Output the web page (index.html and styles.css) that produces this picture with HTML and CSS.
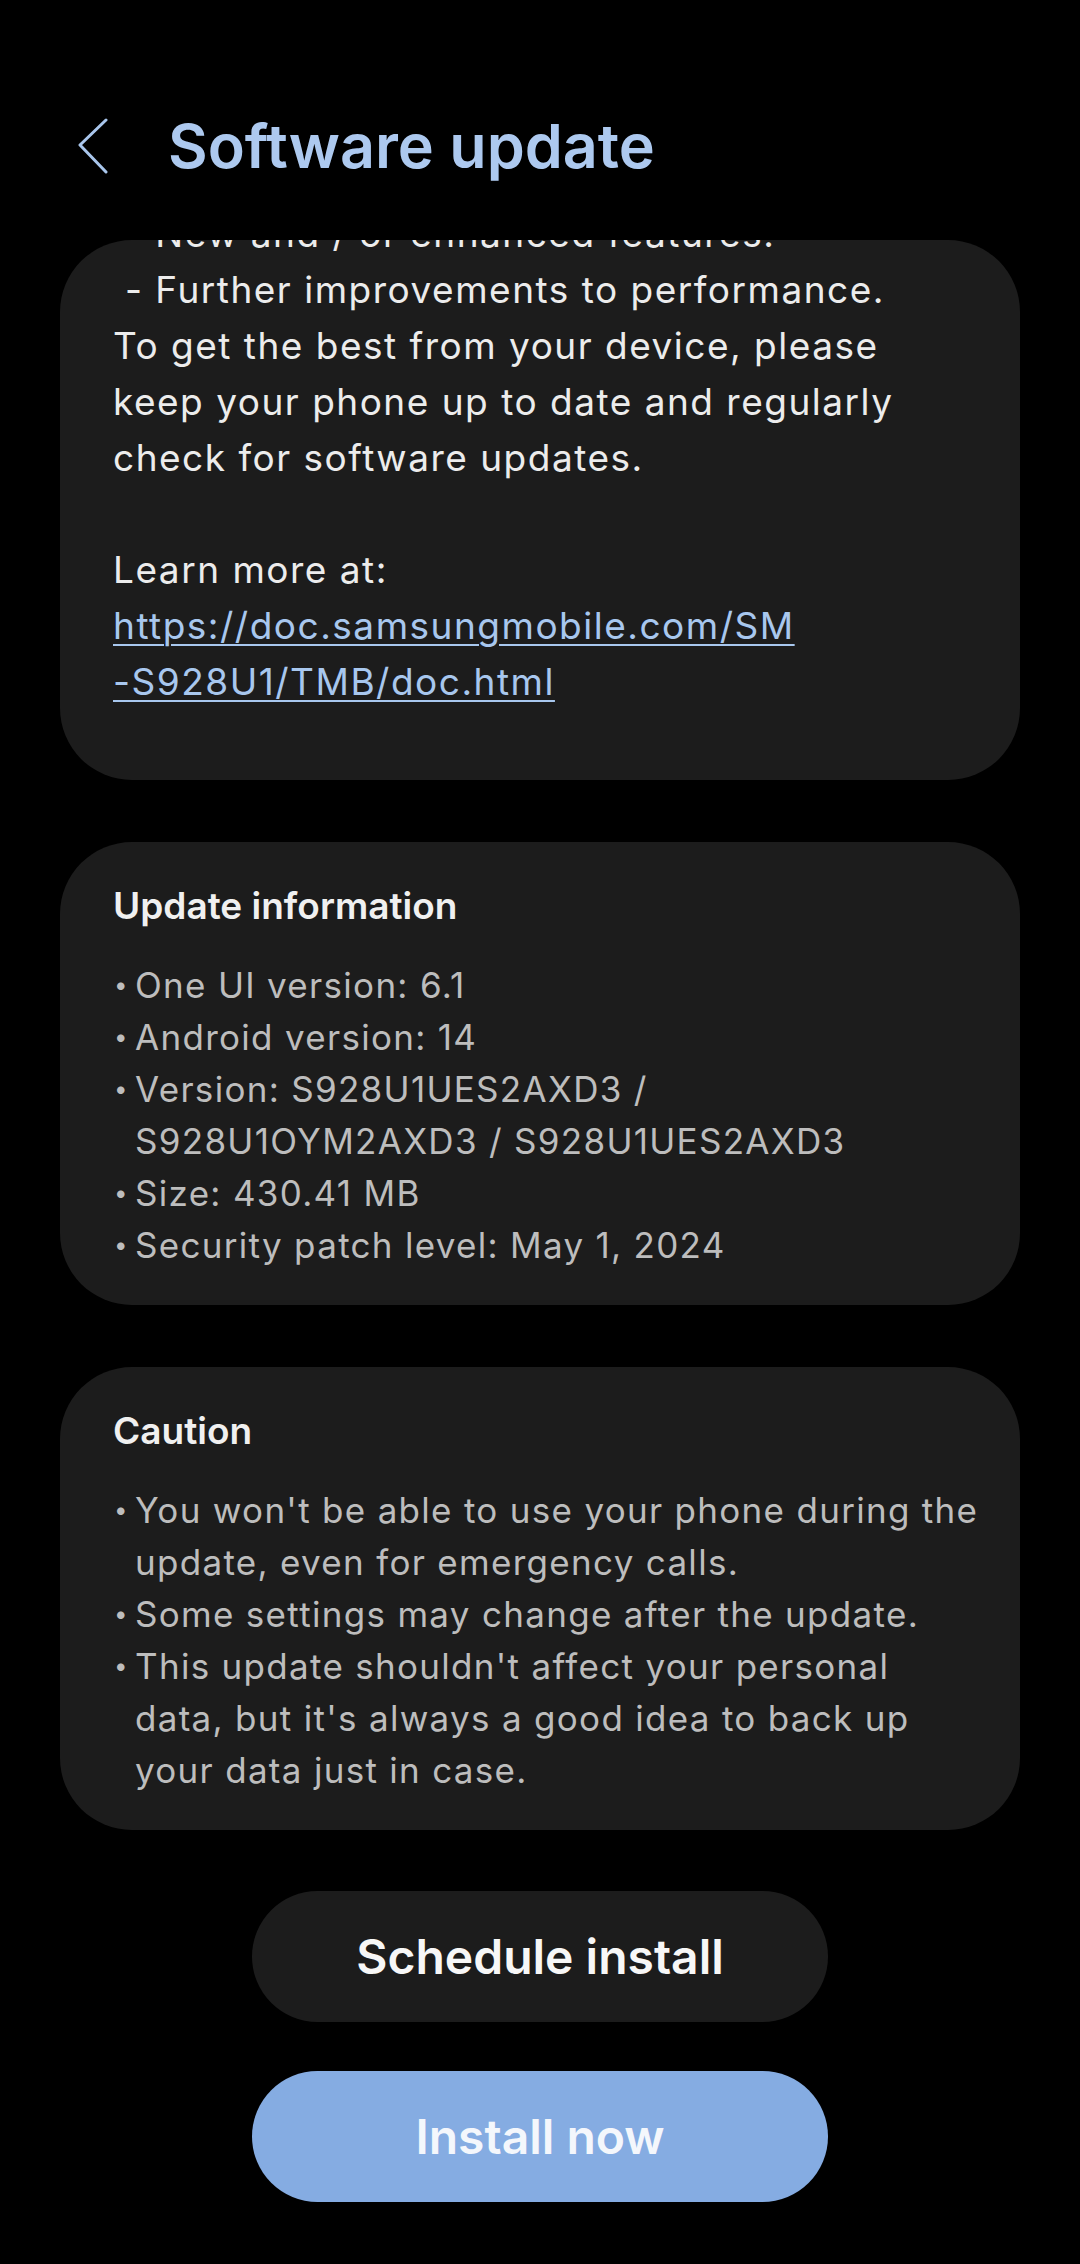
FILE: index.html
```html
<!DOCTYPE html>
<html lang="en">
<head>
    <meta charset="UTF-8">
    <title>Software update</title>
    <link rel="stylesheet" href="styles.css">
</head>
<body>
<div class="header">
    <svg class="back" width="34" height="56" viewBox="0 0 34 56">
        <polyline points="30,2 4,27 30,54" fill="none" stroke="#a9c6ec" stroke-width="3" stroke-linecap="round" stroke-linejoin="round"/>
    </svg>
    <h1>Software update</h1>
</div>
<div class="main">
    <div class="card notes">
        <p class="notes-text"> - New and / or enhanced features.
 - Further improvements to performance.
To get the best from your device, please
keep your phone up to date and regularly
check for software updates.

Learn more at:
<a href="#">https://doc.samsungmobile.com/SM<br>-S928U1/TMB/doc.html</a></p>
    </div>
    <div class="card info">
        <h3>Update information</h3>
        <ul>
            <li>One UI version: 6.1</li>
            <li>Android version: 14</li>
            <li>Version: S928U1UES2AXD3 /<br>S928U1OYM2AXD3 / S928U1UES2AXD3</li>
            <li>Size: 430.41 MB</li>
            <li>Security patch level: May 1, 2024</li>
        </ul>
    </div>
    <div class="card info">
        <h3>Caution</h3>
        <ul>
            <li>You won't be able to use your phone during the<br>update, even for emergency calls.</li>
            <li>Some settings may change after the update.</li>
            <li>This update shouldn't affect your personal<br>data, but it's always a good idea to back up<br>your data just in case.</li>
        </ul>
    </div>
    <div class="btns">
        <button class="btn">Schedule install</button>
        <button class="btn primary">Install now</button>
    </div>
</div>
</body>
</html>
```

FILE: styles.css
```css
body {
    margin: 0;
    background: #000;
    font-family: Inter, Roboto, sans-serif;
    color: #ececec;
}
.header {
    display: flex;
    align-items: center;
    padding: 110px 0 0 76px;
}
.header .back {
    flex: none;
}
.header h1 {
    margin: 0 0 0 58px;
    font-size: 61px;
    line-height: 72px;
    font-weight: 600;
    color: #adc9ef;
}
.main {
    padding: 58px 60px 0;
}
.card {
    background: #1c1c1c;
    border-radius: 72px;
    overflow: hidden;
}
.card + .card {
    margin-top: 62px;
}
.notes {
    padding: 0 40px 70px 53px;
}
.notes-text {
    margin: -34px 0 0;
    white-space: pre-wrap;
    font-size: 37px;
    line-height: 56px;
    letter-spacing: 1.5px;
}
.notes-text a {
    color: #a8c7ee;
    text-decoration: underline;
    text-decoration-thickness: 2px;
    text-underline-offset: 5px;
}
.info {
    padding: 40px 30px 34px 53px;
}
.info h3 {
    margin: 0 0 29px;
    font-size: 37px;
    line-height: 48px;
    font-weight: 600;
    color: #f0f0f0;
}
.info ul {
    margin: 0;
    padding: 0;
    list-style: none;
}
.info li {
    display: flex;
    font-size: 35px;
    line-height: 52px;
    letter-spacing: 1.3px;
    color: #bdbdbd;
}
.info li::before {
    content: "\2022";
    flex: none;
    width: 21px;
    padding-left: 1px;
    font-size: 24px;
    letter-spacing: 0;
}
.btns {
    display: flex;
    flex-direction: column;
    align-items: center;
    gap: 49px;
    padding-top: 61px;
}
.btn {
    width: 576px;
    height: 131px;
    border: 0;
    border-radius: 66px;
    background: #1c1c1c;
    color: #f7f7f7;
    font-family: Inter, Roboto, sans-serif;
    font-size: 48px;
    font-weight: 600;
    outline: none;
}
.btn.primary {
    background: #85ace2;
    color: #f4f7fc;
}
```
